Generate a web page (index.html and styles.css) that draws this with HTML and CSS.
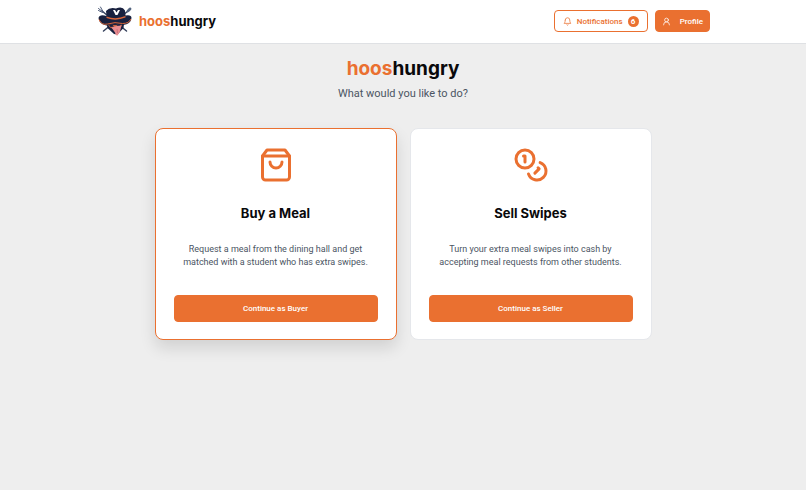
FILE: index.html
```html
<!DOCTYPE html>
<html lang="en">
<head>
    <meta charset="UTF-8">
    <meta name="viewport" content="width=device-width, initial-scale=1.0">
    <title>hooshungry</title>
    <link rel="stylesheet" href="styles.css">
</head>
<body>
    <header class="header">
        <div class="header-inner">
            <a class="brand" href="#">
                <svg class="logo" viewBox="0 0 70 60" aria-hidden="true">
                    <!-- crossed cutlery -->
                    <path d="M9 10 58 50M61 10 12 50" stroke="#35405c" stroke-width="3" stroke-linecap="round"/>
                    <path d="M2 5l9 7M6 2l5 9M2 9l8 4" stroke="#4c5a78" stroke-width="2" stroke-linecap="round"/>
                    <ellipse cx="63" cy="8" rx="6" ry="3" transform="rotate(-42 63 8)" fill="#53647f"/>
                    <!-- face -->
                    <path d="M17 29h37l-2 15-12 13-7-1-13-12z" fill="#18213f"/>
                    <path d="M20 36q15 4 30 0l-4 8-10 4-11-5z" fill="#c96340"/>
                    <path d="M23 38q6-3 10 3l-7 1zM38 40q5-6 9-3l-3 4z" fill="#18213f"/>
                    <path d="M28 43q10-4 20-4l-3 12-5 8q-4 1-5-6z" fill="#e88d91"/>
                    <path d="M39 46l1 8" stroke="#b95362" stroke-width="1"/>
                    <!-- hat -->
                    <path d="M2 24Q4 16 18 20L17 10Q24 2 37 5Q50 0 55 9L56 19Q68 17 68 24Q67 36 51 38Q34 34 18 39Q3 36 2 24z" fill="#18213f"/>
                    <path d="M18 21q19 7 38-1v3q-19 8-38 1z" fill="#d96639"/>
                    <path d="M3 27Q8 39 20 36Q35 31 50 35Q63 35 67 26" fill="none" stroke="#d96639" stroke-width="2"/>
                    <path d="M31 8h4l3 5 3-5h4l-5 10h-4z" fill="#fff"/>
                </svg>
                <span class="brand-name"><span class="accent">hoos</span>hungry</span>
            </a>
            <nav class="nav">
                <button class="btn btn-outline" type="button">
                    <svg class="icon" viewBox="0 0 24 24" aria-hidden="true">
                        <path d="M6 8a6 6 0 0 1 12 0c0 7 3 9 3 9H3s3-2 3-9"/>
                        <path d="M10.3 21a1.94 1.94 0 0 0 3.4 0"/>
                    </svg>
                    Notifications
                    <span class="badge">6</span>
                </button>
                <button class="btn btn-profile" type="button">
                    <svg class="icon" viewBox="0 0 24 24" aria-hidden="true">
                        <circle cx="12" cy="8" r="5"/>
                        <path d="M20 21a8 8 0 0 0-16 0"/>
                    </svg>
                    Profile
                </button>
            </nav>
        </div>
    </header>

    <main class="main">
        <h1 class="title"><span class="accent">hoos</span>hungry</h1>
        <p class="subtitle">What would you like to do?</p>

        <div class="cards">
            <section class="card card-selected">
                <svg class="card-icon" viewBox="0 0 24 24" aria-hidden="true">
                    <path d="M6 2 3 6v14a2 2 0 0 0 2 2h14a2 2 0 0 0 2-2V6l-3-4Z"/>
                    <path d="M3 6h18"/>
                    <path d="M16 10a4 4 0 0 1-8 0"/>
                </svg>
                <h2 class="card-title">Buy a Meal</h2>
                <p class="card-text">Request a meal from the dining hall and get matched with a student who has extra swipes.</p>
                <button class="btn btn-wide" type="button">Continue as Buyer</button>
            </section>

            <section class="card">
                <svg class="card-icon" viewBox="0 0 24 24" aria-hidden="true">
                    <circle cx="8" cy="8" r="6"/>
                    <path d="M18.09 10.37A6 6 0 1 1 10.34 18"/>
                    <path d="M7 6h1v4"/>
                    <path d="m16.71 13.88.7.71-2.82 2.82"/>
                </svg>
                <h2 class="card-title">Sell Swipes</h2>
                <p class="card-text">Turn your extra meal swipes into cash by accepting meal requests from other students.</p>
                <button class="btn btn-wide" type="button">Continue as Seller</button>
            </section>
        </div>
    </main>
</body>
</html>
```

FILE: styles.css
```css
* {
    box-sizing: border-box;
}

body {
    margin: 0;
    min-height: 100vh;
    background-color: #eeeeee;
    color: #09090b;
    font-family: Roboto, "Liberation Sans", sans-serif;
}

h1, h2, p {
    margin: 0;
}

.brand-name, .title, .card-title {
    font-family: Inter, "Liberation Sans", sans-serif;
    font-weight: 700;
}

.accent {
    color: #ea7030;
}

/* header */
.header {
    background-color: #fff;
    border-bottom: 1px solid #dfe1e4;
}

.header-inner {
    display: flex;
    align-items: center;
    justify-content: space-between;
    max-width: 614px;
    height: 43px;
    margin: 0 auto;
    padding-bottom: 1px;
}

.brand {
    display: flex;
    align-items: center;
    gap: 6px;
    padding-left: 1px;
    color: inherit;
    text-decoration: none;
}

.logo {
    width: 36px;
    height: 30px;
    fill: none;
}

.brand-name {
    font-size: 13px;
}

.nav {
    display: flex;
    gap: 7px;
}

/* buttons */
.btn {
    display: flex;
    align-items: center;
    justify-content: center;
    height: 22px;
    padding: 0 8px;
    border: 1px solid #ea7030;
    border-radius: 4px;
    background-color: #ea7030;
    color: #fff;
    font-family: inherit;
    font-size: 8px;
    font-weight: 500;
    cursor: pointer;
}

.btn-outline {
    gap: 5px;
    background-color: #fff;
    color: #ea7030;
}

.btn-profile {
    gap: 9px;
    padding: 0 6px;
}

.btn-wide {
    width: 100%;
    height: 27px;
}

.icon,
.card-icon {
    fill: none;
    stroke: currentColor;
    stroke-width: 2;
    stroke-linecap: round;
    stroke-linejoin: round;
}

.icon {
    width: 9px;
    height: 9px;
}

.badge {
    width: 11px;
    height: 11px;
    border-radius: 50%;
    background-color: #ea7030;
    color: #fff;
    font-size: 8px;
    font-weight: 700;
    line-height: 11px;
    text-align: center;
}

/* role picker */
.main {
    max-width: 497px;
    margin: 0 auto;
    padding-top: 13px;
    text-align: center;
}

.title {
    font-size: 19px;
    line-height: 24px;
}

.subtitle {
    margin-top: 4px;
    color: #4b5563;
    font-size: 11px;
    line-height: 18px;
}

.cards {
    display: grid;
    grid-template-columns: 1fr 1fr;
    gap: 13px;
    margin-top: 25px;
}

.card {
    display: flex;
    flex-direction: column;
    align-items: center;
    padding: 18px 18px 17px;
    border: 1px solid #e5e7eb;
    border-radius: 8px;
    background-color: #fff;
}

.card-selected {
    border-color: #ea7030;
    box-shadow: 0 8px 16px rgba(0, 0, 0, 0.12);
}

.card-icon {
    width: 36px;
    height: 36px;
    color: #ea7030;
}

.card-title {
    margin-top: 20px;
    font-size: 13px;
    line-height: 20px;
}

.card-text {
    max-width: 200px;
    margin: 20px 0 26px;
    color: #4b5563;
    font-size: 9px;
    line-height: 13px;
}
```
